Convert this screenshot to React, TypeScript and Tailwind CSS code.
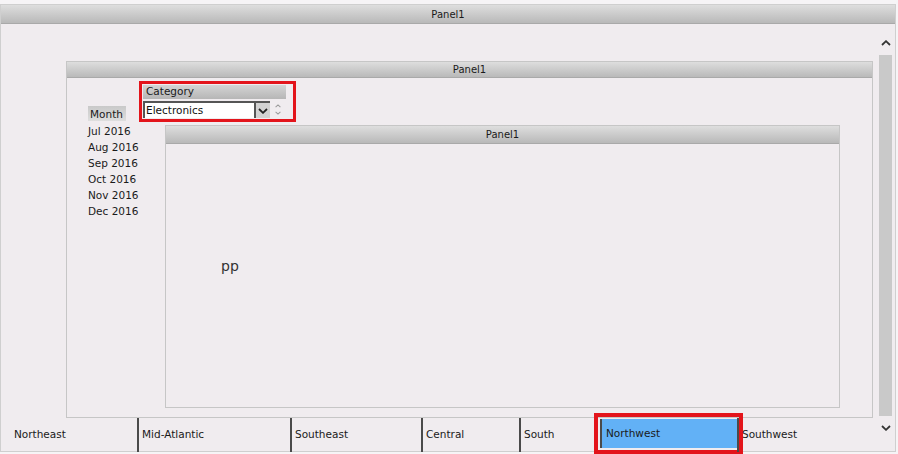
/*
 * Nested panel dashboard: outer Panel1 with a vertical scrollbar, an inner Panel1
 * holding the Month list, the Category picker and a third Panel1, and the region
 * tab strip along the bottom (Northwest selected).
 */
const FONT = "font-['DejaVu_Sans',sans-serif]";

const MONTHS = ["Jul 2016", "Aug 2016", "Sep 2016", "Oct 2016", "Nov 2016", "Dec 2016"];

const REGIONS: { name: string; w: string; active?: boolean }[] = [
  { name: "Northeast", w: "w-[136px]" },
  { name: "Mid-Atlantic", w: "w-[153px]" },
  { name: "Southeast", w: "w-[131px]" },
  { name: "Central", w: "w-[98px]" },
  { name: "South", w: "w-[81px]" },
  { name: "Northwest", w: "w-[137px]", active: true },
  { name: "Southwest", w: "flex-1" },
];

function Chevron({ up, className }: { up?: boolean; className?: string }) {
  return (
    <svg width="10" height="6" viewBox="0 0 10 6" className={className}>
      <path
        d={up ? "M1 5 L5 1.2 L9 5" : "M1 1 L5 4.8 L9 1"}
        fill="none"
        stroke="currentColor"
        strokeWidth="1.8"
      />
    </svg>
  );
}

function PanelHeader({ h }: { h: string }) {
  return (
    <div
      className={`${h} flex shrink-0 items-center justify-center border-b border-[#a9a9a9] bg-gradient-to-b from-[#dedede] to-[#b9b9b9] text-[10px] text-[#1a1a1a]`}
    >
      Panel1
    </div>
  );
}

function CategoryPicker() {
  return (
    <div className="-ml-[26px] h-[41px] w-[157px] shrink-0 border-[3px] border-[#e3141b] bg-[#f0ecef] pl-px pt-px">
      <div className="flex h-[14px] w-[143px] items-center bg-gradient-to-b from-[#d4d4d4] to-[#b6b6b6] pl-[3px] text-[10.5px] text-[#1a1a1a]">
        Category
      </div>
      <div className="mt-[2px] flex items-center">
        <div className="flex h-[17px] w-[127px] items-center border-l-2 border-t-2 border-[#555] bg-white">
          <span className="flex-1 pl-[1px] text-[10.5px] leading-none text-[#111]">Electronics</span>
          <span className="flex h-full w-[16px] items-center justify-center border-l-2 border-[#555] bg-[#d2d2d2] text-[#222]">
            <Chevron className="h-[6px] w-[10px]" />
          </span>
        </div>
        <div className="ml-[3px] flex w-[9px] flex-col items-center gap-[3px] text-[#9a9a9a]">
          <Chevron up className="h-[4px] w-[6px]" />
          <Chevron className="h-[4px] w-[6px]" />
        </div>
      </div>
    </div>
  );
}

function InnerPanel() {
  return (
    <div className="ml-[65px] mr-[3px] flex h-[357px] flex-col border border-[#c6c6c6] bg-[#f0ecef]">
      <PanelHeader h="h-[16px]" />
      <div className="flex flex-1 pl-[21px]">
        <div className="w-[77px] shrink-0 pt-[28px]">
          <div className="flex h-[15px] w-[38px] items-end bg-gradient-to-b from-[#c9c9c9] to-[#dedede] pl-[2px] text-[10.5px] leading-[14px] text-[#1a1a1a]">
            Month
          </div>
          <ul className="pt-[2px]">
            {MONTHS.map((m) => (
              <li key={m} className="h-[16px] text-[10.5px] leading-[16px] text-[#1a1a1a]">
                {m}
              </li>
            ))}
          </ul>
        </div>
        <div className="mb-[9px] mr-[32px] flex flex-1 flex-col pt-[3px]">
          <CategoryPicker />
          <div className="mt-[3px] flex flex-1 flex-col border border-[#c6c6c6]">
            <PanelHeader h="h-[18px]" />
            <div className="flex-1 pl-[55px] pt-[112px] text-[14px] text-[#333]">pp</div>
          </div>
        </div>
      </div>
    </div>
  );
}

function RegionTabs() {
  return (
    <div className="flex h-[34px] shrink-0">
      {REGIONS.map((r, i) => (
        <div
          key={r.name}
          className={`${r.w} flex items-center text-[10.5px] text-[#1a1a1a] ${
            i === 0 ? "pl-[13px]" : "border-l-2 border-[#4a4a4a] pl-[3px]"
          } ${
            r.active
              ? "mb-[4px] mt-[1px] bg-[#62b1f6] pl-[4px] outline-[4px] outline-offset-[2px] outline-solid outline-[#e3141b]"
              : ""
          }`}
        >
          {r.name}
        </div>
      ))}
    </div>
  );
}

function Scrollbar() {
  return (
    <div className="flex w-[19px] shrink-0 flex-col items-center pt-[16px]">
      <Chevron up className="h-[6px] w-[10px] text-[#333]" />
      <div className="mt-[9px] h-[361px] w-[13px] bg-[#c9c9c9]" />
      <Chevron className="mt-[9px] h-[6px] w-[10px] text-[#333]" />
    </div>
  );
}

export default function App() {
  return (
    <div className={`${FONT} h-[454px] w-[898px] overflow-hidden bg-[#f6f4f6] pt-[4px]`}>
      <div className="mr-[2px] flex h-[448px] flex-col border border-[#cfcfcf] bg-[#f0ecef]">
        <PanelHeader h="h-[19px]" />
        <div className="flex flex-1">
          <div className="flex flex-1 flex-col pt-[37px]">
            <InnerPanel />
            <RegionTabs />
          </div>
          <Scrollbar />
        </div>
      </div>
    </div>
  );
}
